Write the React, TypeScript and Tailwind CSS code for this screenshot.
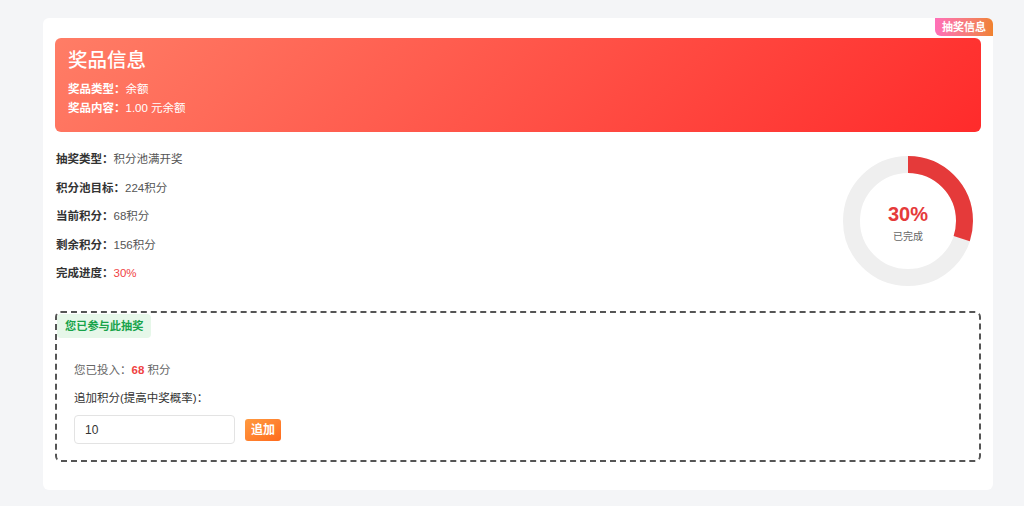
import React from "react";

const rows: { label: string; value: string; red?: boolean }[] = [
  { label: "抽奖类型：", value: "积分池满开奖" },
  { label: "积分池目标：", value: "224积分" },
  { label: "当前积分：", value: "68积分" },
  { label: "剩余积分：", value: "156积分" },
  { label: "完成进度：", value: "30%", red: true },
];

const Donut: React.FC<{ percent: number }> = ({ percent }) => {
  const r = 56.5;
  const c = 2 * Math.PI * r;
  return (
    <div className="relative w-[130px] h-[130px]">
      <svg width="130" height="130" viewBox="0 0 130 130" className="-rotate-90">
        <circle cx="65" cy="65" r={r} fill="none" stroke="#efefef" strokeWidth="17" />
        <circle
          cx="65"
          cy="65"
          r={r}
          fill="none"
          stroke="#e53a3a"
          strokeWidth="17"
          strokeDasharray={`${(c * percent) / 100} ${c}`}
        />
      </svg>
      <div className="absolute inset-0 flex flex-col items-center justify-center pt-[4px]">
        <div className="text-[20px] font-bold text-[#e53a3a] leading-[24px]">{percent}%</div>
        <div className="text-[10px] text-[#666] leading-[14px] mt-[4px]">已完成</div>
      </div>
    </div>
  );
};

const App: React.FC = () => {
  return (
    <div
      className="w-[1024px] h-[506px] bg-[#f4f5f7] pt-[18px] pl-[43px]"
      style={{ fontFamily: '"Liberation Sans", "Noto Sans CJK SC", sans-serif' }}
    >
      <div className="relative w-[950px] h-[472px] bg-white rounded-[6px] px-[12px] pt-[20px]">
        {/* Badge */}
        <div className="absolute top-0 right-0 h-[18px] px-[7px] flex items-center text-[11px] font-bold text-white rounded-tr-[6px] rounded-bl-[6px] bg-gradient-to-r from-[#ff6fb8] to-[#f0822c]">
          抽奖信息
        </div>

        {/* Prize banner */}
        <div className="h-[94px] rounded-[6px] bg-[linear-gradient(135deg,#ff7d66_0%,#ff2b2b_100%)] px-[13px] pt-[10px] text-white">
          <div className="text-[19.5px] font-medium leading-[24px]">奖品信息</div>
          <div className="mt-[8px] text-[11.5px] leading-[19px]">
            <div>
              <span className="font-bold">奖品类型：</span>余额
            </div>
            <div>
              <span className="font-bold">奖品内容：</span>1.00 元余额
            </div>
          </div>
        </div>

        {/* Stats */}
        <div className="mt-[18px] flex justify-between items-start pr-[8px]">
          <div className="flex flex-col gap-[10px] pl-[1px]">
            {rows.map((r) => (
              <div key={r.label} className="text-[11.5px] leading-[18.5px]">
                <span className="font-bold text-[#333]">{r.label}</span>
                <span className={r.red ? "text-[#f04343]" : "text-[#555]"}>{r.value}</span>
              </div>
            ))}
          </div>
          <div className="mt-[6px]">
            <Donut percent={30} />
          </div>
        </div>

        {/* Participation */}
        <div className="mt-[25px] h-[151px] border-2 border-dashed border-[#555] rounded-[6px]">
          <div className="inline-block h-[24px] px-[8px] leading-[24px] bg-[#e6f7e9] rounded-[4px] text-[11.2px] font-bold text-[#17a34a]">
            您已参与此抽奖
          </div>
          <div className="px-[17px] pt-[23px]">
            <div className="text-[11.5px] leading-[18px] text-[#666]">
              您已投入：<span className="font-bold text-[#f04343]">68</span> 积分
            </div>
            <div className="mt-[10px] text-[11.5px] leading-[18px] text-[#333]">追加积分(提高中奖概率)：</div>
            <div className="mt-[8px] flex items-center">
              <input
                defaultValue="10"
                className="w-[161px] h-[29px] border border-[#e3e3e3] rounded-[4px] px-[10px] text-[12px] text-[#333] outline-none"
              />
              <button className="ml-[10px] w-[36px] h-[22px] rounded-[3px] bg-gradient-to-br from-[#ff9a40] to-[#ff6a1c] text-white text-[12px] font-bold">
                追加
              </button>
            </div>
          </div>
        </div>
      </div>
    </div>
  );
};

export default App;
